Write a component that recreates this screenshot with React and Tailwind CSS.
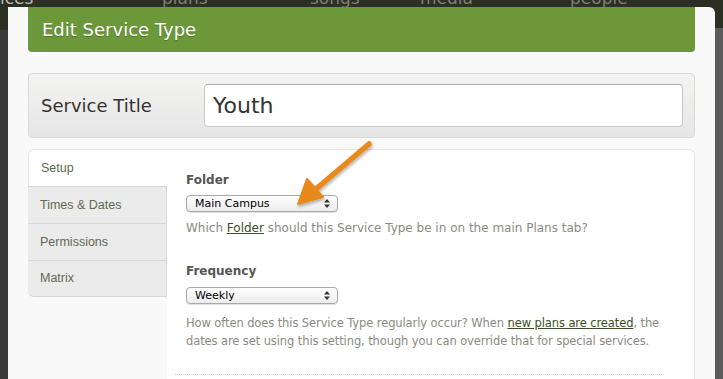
import React from 'react';

const Select = ({ value }) => (
    <div className="flex items-center justify-between w-[152px] h-[17px] pl-2 pr-[7px] rounded-[4px] border border-[#a8a8a8] bg-gradient-to-b from-white to-[#ececec] shadow-[0_1px_1px_rgba(0,0,0,0.12)]">
        <span className="text-[11px] leading-none text-black">{value}</span>
        <svg width="6" height="9" viewBox="0 0 6 9">
            <path d="M3 0L6 3.4H0z M3 9L0 5.6H6z" fill="#333" />
        </svg>
    </div>
);

const tabs = ['Setup', 'Times & Dates', 'Permissions', 'Matrix'];

export default function App() {
    return (
        <div className="relative w-[723px] h-[379px] overflow-hidden bg-[#3a3a3a] font-['DejaVu_Sans',sans-serif]">
            {/* app behind the dialog */}
            <div className="flex items-start h-[30px] overflow-hidden bg-[#2c3022] text-[#7d7f74] text-[17px] leading-none">
                <span className="-mt-[10px] w-[120px] text-[#b9b9b9]">ices</span>
                <span className="-mt-[10px] ml-[42px] w-[88px]">plans</span>
                <span className="-mt-[10px] ml-[60px] w-[110px]">songs</span>
                <span className="-mt-[10px] w-[100px]">media</span>
                <span className="-mt-[10px] ml-[50px]">people</span>
            </div>
            <div className="absolute right-0 top-[28px] w-[10px] h-[351px] bg-[#5c5c5c]" />

            {/* dialog */}
            <div className="absolute left-[8px] top-[7px] w-[707px] h-[400px] rounded-tr-[6px] bg-[#f9f9f9] px-5">
                <div className="flex items-center h-[45px] px-[14px] rounded-b-[4px] bg-[#6c983a]">
                    <h1 className="text-[18px] text-white [text-shadow:0_1px_1px_rgba(0,0,0,0.25)]">Edit Service Type</h1>
                </div>

                <div className="flex items-center justify-between mt-[21px] h-[65px] pl-3 pr-[11px] rounded-[4px] border border-[#d9d9d6] bg-gradient-to-b from-[#f3f3f1] to-[#e6e6e6]">
                    <span className="text-[18px] text-[#333]">Service Title</span>
                    <div className="flex items-center w-[479px] h-[43px] px-2 rounded-[4px] border border-[#c8c8c8] border-t-[#a9a9a9] bg-white">
                        <span className="text-[22px] text-[#333]">Youth</span>
                    </div>
                </div>

                <div className="flex mt-[11px] h-[260px]">
                    <div className="w-[139px] flex flex-col">
                        {tabs.map((t, i) => (
                            <div
                                key={t}
                                className={`flex items-center h-[37px] pl-3 font-['Liberation_Sans',sans-serif] text-[12.5px] text-[#5f6a52] ${
                                    i === 0
                                        ? 'bg-white rounded-tl-[6px] border-t border-l border-[#e4e4e4]'
                                        : 'bg-[#ebebeb] border-t border-r border-[#d6d6d6]'
                                } ${i === tabs.length - 1 ? 'rounded-bl-[6px] border-b' : ''}`}
                            >
                                {t}
                            </div>
                        ))}
                    </div>
                    <div className="flex-1 bg-white border-t border-r border-[#e4e4e4] rounded-tr-[6px] pl-[8px] pr-[8px]">
                        <div className="pl-[11px] pt-[21px]">
                            <div className="text-[12px] font-bold text-[#555]">Folder</div>
                            <div className="mt-[6px]">
                                <Select value="Main Campus" />
                            </div>
                            <p className="mt-[7px] text-[12px] leading-[18px] text-[#8b8b80]">
                                Which <span className="underline text-[#3e4d26]">Folder</span> should this Service Type be in on the main Plans tab?
                            </p>

                            <div className="mt-[25px] text-[12px] font-bold text-[#555]">Frequency</div>
                            <div className="mt-[7px]">
                                <Select value="Weekly" />
                            </div>
                            <p className="mt-[10px] text-[11.5px] tracking-[-0.1px] leading-[18px] text-[#8b8b80]">
                                How often does this Service Type regularly occur? When{' '}
                                <span className="underline text-[#3e4d26]">new plans are created</span>, the dates are set using this setting, though you can override that for special services.
                            </p>
                        </div>
                        <div className="mt-[24px] mr-[22px] border-t border-dotted border-[#c4ccd6]" />
                    </div>
                </div>
            </div>

            {/* callout arrow */}
            <svg className="absolute left-0 top-0" width="723" height="379" viewBox="0 0 723 379">
                <defs>
                    <filter id="sh" x="-20%" y="-20%" width="140%" height="140%">
                        <feDropShadow dx="1" dy="2" stdDeviation="1.5" floodColor="#000" floodOpacity="0.3" />
                    </filter>
                </defs>
                <g filter="url(#sh)">
                    <line x1="369" y1="144" x2="316" y2="189" stroke="#e8891e" strokeWidth="5.5" strokeLinecap="round" />
                    <path d="M298 204L307 179L323 197Z" fill="#e8891e" stroke="#e8891e" strokeWidth="2" strokeLinejoin="round" />
                </g>
            </svg>
        </div>
    );
}
